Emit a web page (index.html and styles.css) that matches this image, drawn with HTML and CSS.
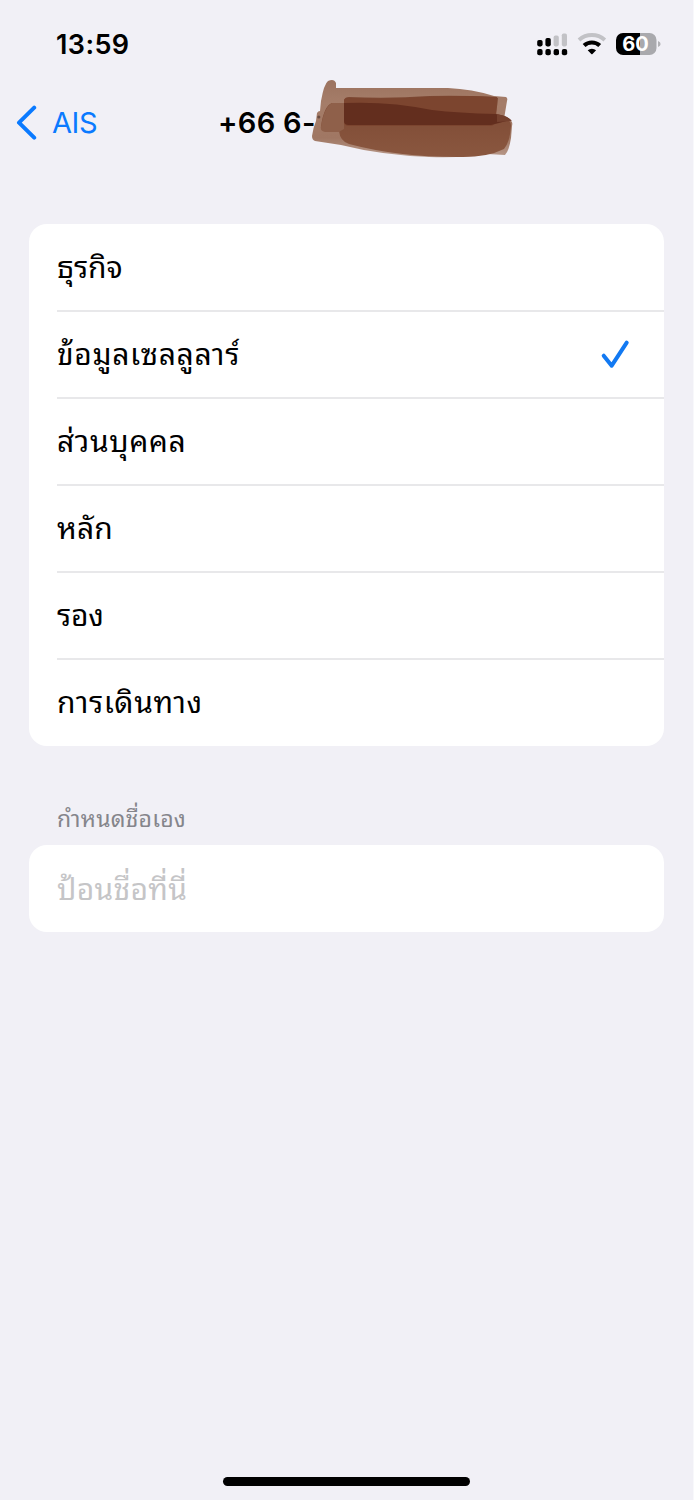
FILE: index.html
```html
<!DOCTYPE html>
<html lang="th">
<head>
<meta charset="utf-8">
<title>ป้ายกำกับซิม</title>
<link rel="stylesheet" href="styles.css">
</head>
<body>
<main class="screen">
  <header class="status">
    <span class="time">13:59</span>
    <svg class="status-icons" width="130" height="30" viewBox="0 0 130 30">
      <g fill="#000">
        <rect x="1.2" y="10" width="5.4" height="6.4" rx="1.8"/>
        <rect x="9.4" y="8" width="5.4" height="8.4" rx="1.8"/>
        <rect x="1.2" y="19" width="5.4" height="6.2" rx="2"/>
        <rect x="9.4" y="19" width="5.4" height="6.2" rx="2"/>
        <rect x="17.6" y="19" width="5.4" height="6.2" rx="2"/>
        <rect x="25.8" y="19" width="5.4" height="6.2" rx="2"/>
      </g>
      <g fill="#c2c2c6">
        <rect x="17.6" y="5.6" width="5.2" height="10.8" rx="1.8"/>
        <rect x="25.8" y="3.4" width="5.2" height="13" rx="1.8"/>
      </g>
      <path d="M43 9.900a19.500 19.500 0 0 1 25.800 0" fill="none" stroke="#c2c2c6" stroke-width="4"/>
      <path d="M48.100 15.500a11.600 11.600 0 0 1 15.600 0" fill="none" stroke="#000" stroke-width="4.200"/>
      <path d="M51.700 20.300a6.300 6.300 0 0 1 8.400 0l-3.600 3.600q-.6.6-1.200 0Z" fill="#000"/>
      <path d="M87 3h17v22H87a7 7 0 0 1-7-7v-8a7 7 0 0 1 7-7Z" fill="#000"/>
      <path d="M104 3h9.500a7 7 0 0 1 7 7v8a7 7 0 0 1-7 7H104Z" fill="#a9a9ad"/>
      <path d="M122 11q2.600 1 2.600 3t-2.600 3Z" fill="#b2b2b6"/>
      <text class="charge" x="99.500" y="21.300">60</text>
    </svg>
  </header>
  <nav class="nav">
    <svg class="back" width="22" height="36" viewBox="0 0 22 36"><path d="M18.200 2.700 3 17.700l15.200 15" fill="none" stroke="#0a7aff" stroke-width="4" stroke-linecap="round" stroke-linejoin="round"/></svg>
    <span class="parent">AIS</span>
    <h1 class="title">+66 6-</h1>
    <svg class="scribble" width="206" height="84" viewBox="310 76 206 84">
      <defs>
        <linearGradient id="ink" x1="0" y1="0" x2="0" y2="1">
          <stop offset="0" stop-color="#9c735f"/><stop offset=".3" stop-color="#a57d69"/>
          <stop offset=".75" stop-color="#a07763"/><stop offset="1" stop-color="#b8998a"/>
        </linearGradient>
        <linearGradient id="wash" x1="0" y1="0" x2="0" y2="1">
          <stop offset="0" stop-color="#7c4833"/><stop offset="1" stop-color="#8a573f"/>
        </linearGradient>
      </defs>
      <path d="M321 101Q324 84 328 81q6-3 8 2v5h112q24 1 46 8l12 1q2 1 1 4l-3 18 7 2q2 1 1 5l-1 12q-2 13-6 17l-18-1q-20 4-58 3-48-2-88-12l-26-4q-3-1-3-5 1-8 4-15l1-8q1-2 3-2Z" fill="url(#ink)"/>
      <path d="M332 103h12v-3q1-3 5-3 40 2 80-1 30-1 66 1l3 1q-1 13-4 22l15 1q2 1 2 5-1 16-7 23-18 9-47 8-59 0-108-13-9-3-10-13h-14q-5-1-4-5 3-20 11-23Z" fill="url(#wash)"/>
      <path d="M332 103h12v26q-2 1-5 3h-14q-5-1-4-5 3-20 11-24Z" fill="#8f604a"/>
      <path d="M344 101q0-3 4-3 40 2 80-1 34-2 69 0l-1 23q-1 6-6 6H349q-5 0-5-4Z" fill="#7c452f"/>
      <path d="M344 103q45-2 88 7 26 3 64 4 12 2 15 6-5 1-12 3l-8 2H349q-5 0-5-4Z" fill="#632e1e"/>
      <path d="M497 114q11 2 15 7l-15 1Z" fill="#75412e"/>
      <circle cx="318.800" cy="117" r="1.600" fill="#6a4c40"/>
    </svg>
  </nav>
  <section class="card">
    <div class="row"><span class="label l1">ธุรกิจ</span></div>
    <div class="row"><span class="label l2">ข้อมูลเซลลูลาร์</span>
      <svg class="check" width="30" height="30" viewBox="0 0 30 30"><path d="m3.700 16.700 8 10 15-23" fill="none" stroke="#1279f2" stroke-width="4" stroke-linecap="round" stroke-linejoin="round"/></svg>
    </div>
    <div class="row"><span class="label l3">ส่วนบุคคล</span></div>
    <div class="row"><span class="label l4">หลัก</span></div>
    <div class="row"><span class="label l5">รอง</span></div>
    <div class="row"><span class="label l6">การเดินทาง</span></div>
  </section>
  <h2 class="caption">กำหนดชื่อเอง</h2>
  <div class="field"><span class="placeholder">ป้อนชื่อที่นี่</span></div>
  <div class="home"></div>
</main>
</body>
</html>
```

FILE: styles.css
```css
* { box-sizing: border-box; }
body { margin: 0; background: #f1f0f6; }
.screen {
  width: 694px;
  height: 1500px;
  display: flex;
  flex-direction: column;
  overflow: hidden;
  border-right: 1px solid #f8f8fb;
  font-family: Inter, Thonburi, "Noto Sans Thai Looped", Loma, Umpush, Garuda, Waree, "Noto Sans Thai", sans-serif;
  color: #000;
}
.status {
  height: 80px;
  padding: 30px 27px 0 56px;
  display: flex;
  justify-content: space-between;
}
.time { font-size: 27px; line-height: 30px; font-weight: 600; letter-spacing: .4px; }
.charge { font: 700 20px Inter, sans-serif; fill: #fff; text-anchor: middle; }
.nav {
  height: 84px;
  padding-left: 16px;
  display: flex;
  align-items: center;
}
.back { margin-top: 2px; }
.parent { width: 180px; padding: 2px 0 0 14px; font-size: 29px; line-height: 36px; letter-spacing: -.4px; color: #0a7aff; }
.title { width: 92px; margin: 0; padding-top: 2px; font-size: 29px; line-height: 36px; font-weight: 600; letter-spacing: .3px; white-space: nowrap; }
.scribble { flex: none; align-self: flex-start; margin-top: -4px; filter: blur(.7px); }
.card, .field { margin: 60px 29px 0; background: #fff; border-radius: 18px; }
.row {
  height: 87px;
  margin-left: 28px;
  padding-right: 34px;
  display: flex;
  align-items: center;
  justify-content: space-between;
}
.row:first-child { height: 86px; }
.row:last-child { height: 88px; }
.row + .row { border-top: 2px solid #e8e8ea; padding-bottom: 2px; }
.check { margin-top: 1px; }
.label { font-size: 30px; line-height: 40px; }
.l1 { letter-spacing: 0; }
.l2 { letter-spacing: .65px; }
.l3 { letter-spacing: .6px; }
.l4 { letter-spacing: .1px; }
.l5 { letter-spacing: -.2px; }
.l6 { letter-spacing: .6px; }
.caption { margin: 58px 57px 0; font-size: 23px; line-height: 30px; font-weight: 400; letter-spacing: .2px; color: #85858b; }
.field { height: 87px; margin-top: 11px; padding-left: 28px; display: flex; align-items: center; }
.placeholder { font-size: 30px; line-height: 40px; letter-spacing: .3px; color: #c5c5c7; }
.home { width: 247px; height: 9px; margin: auto 0 14px 223px; border-radius: 5px; background: #000; }
```
